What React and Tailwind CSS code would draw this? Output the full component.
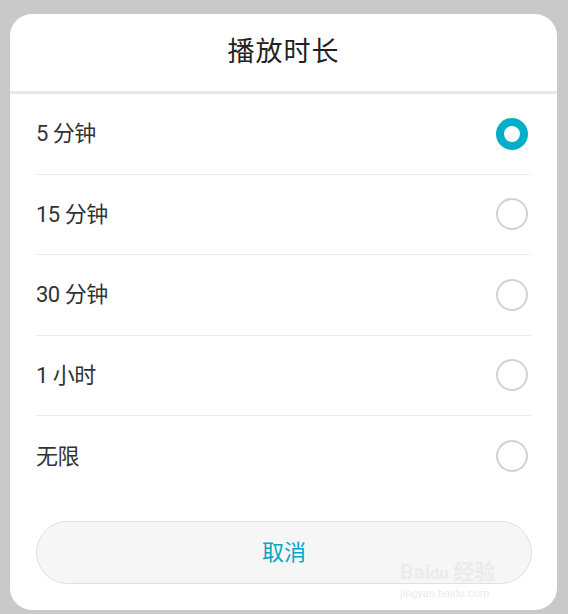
import React from 'react'

const options = ['5 分钟', '15 分钟', '30 分钟', '1 小时', '无限']

function Radio({ checked }) {
    if (checked) {
        return <span className="w-[32px] h-[32px] rounded-full border-[8px] border-[#00aec7] bg-white" />
    }
    return <span className="w-[32px] h-[32px] rounded-full border-[2px] border-[#d2d2d2] bg-white" />
}

export default function App() {
    const selected = 0
    return (
    <div className="w-full h-[614px] bg-[#c9c9c9] pt-[14px] px-[10px] relative" style={{ fontFamily: '"Roboto", "Noto Sans CJK SC", sans-serif' }}>
        <div className="w-[547px] h-[596px] bg-white rounded-[22px] flex flex-col">
            <div className="h-[77px] flex items-center justify-center">
                <h1 className="text-[27px] text-[#222222] tracking-[1px]">播放时长</h1>
            </div>
            <div className="h-[3px] bg-[#e8e8e8]" />
            <div className="px-[26px] flex flex-col">
                {options.map((opt, i) => (
                    <div
                        key={opt}
                        className={`h-[80.5px] flex items-center justify-between pr-[3px] ${i < options.length - 1 ? 'border-b border-[#ececec]' : ''}`}
                    >
                        <span className="text-[22px] text-[#333333] tracking-[-0.5px]">{opt}</span>
                        <Radio checked={i === selected} />
                    </div>
                ))}
            </div>
            <div className="px-[26px] pt-[24px]">
                <button className="w-[496px] h-[63px] rounded-full bg-[#f6f6f6] border border-[#e0e0e0] text-[22px] text-[#00a9c2]">
                    取消
                </button>
            </div>
        </div>
        <div className="absolute left-[400px] top-[560px] flex flex-col items-start text-[#ebebeb] pointer-events-none">
            <span className="text-[21px] font-bold leading-[24px]">Bai<span className="text-[16px]">du</span> 经验</span>
            <span className="text-[11px] leading-[16px]">jingyan.baidu.com</span>
        </div>
    </div>
    )
}
